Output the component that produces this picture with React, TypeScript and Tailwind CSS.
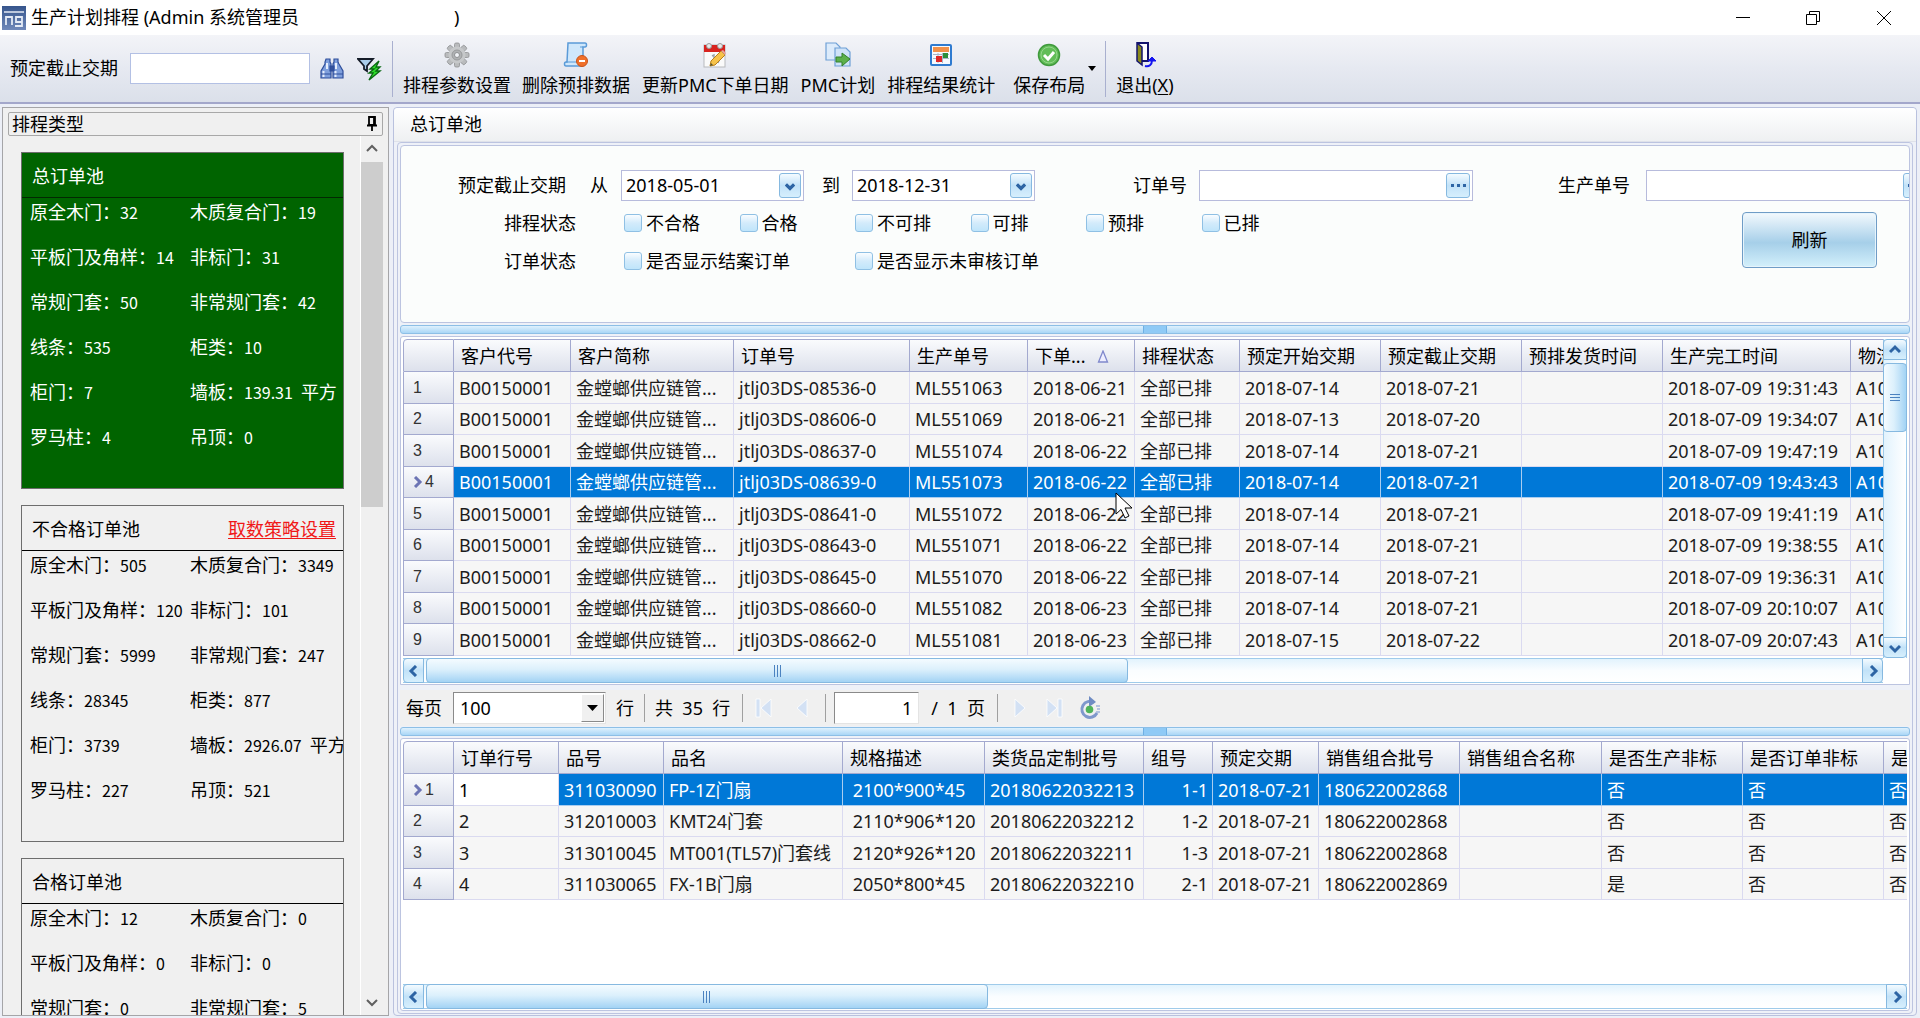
import React from "react";

const ui = "font-['Noto_Sans','Noto_Sans_CJK_SC',sans-serif]";

type CardData = { title: string; link?: string; active?: boolean; items: [string, string, string?][] };

const cards: CardData[] = [
  {
    title: "总订单池",
    active: true,
    items: [
      ["原全木门", "32"], ["木质复合门", "19"],
      ["平板门及角样", "14"], ["非标门", "31"],
      ["常规门套", "50"], ["非常规门套", "42"],
      ["线条", "535"], ["柜类", "10"],
      ["柜门", "7"], ["墙板", "139.31", "平方"],
      ["罗马柱", "4"], ["吊顶", "0"],
    ],
  },
  {
    title: "不合格订单池",
    link: "取数策略设置",
    items: [
      ["原全木门", "505"], ["木质复合门", "3349"],
      ["平板门及角样", "120"], ["非标门", "101"],
      ["常规门套", "5999"], ["非常规门套", "247"],
      ["线条", "28345"], ["柜类", "877"],
      ["柜门", "3739"], ["墙板", "2926.07", "平方"],
      ["罗马柱", "227"], ["吊顶", "521"],
    ],
  },
  {
    title: "合格订单池",
    items: [
      ["原全木门", "12"], ["木质复合门", "0"],
      ["平板门及角样", "0"], ["非标门", "0"],
      ["常规门套", "0"], ["非常规门套", "5"],
    ],
  },
];

const orderHead = ["客户代号", "客户简称", "订单号", "生产单号", "下单...", "排程状态", "预定开始交期", "预定截止交期", "预排发货时间", "生产完工时间", "物流"];
const orders = [
  ["08536", "ML551063", "21", "2018-07-14", "2018-07-21", "19:31:43"],
  ["08606", "ML551069", "21", "2018-07-13", "2018-07-20", "19:34:07"],
  ["08637", "ML551074", "22", "2018-07-14", "2018-07-21", "19:47:19"],
  ["08639", "ML551073", "22", "2018-07-14", "2018-07-21", "19:43:43"],
  ["08641", "ML551072", "22", "2018-07-14", "2018-07-21", "19:41:19"],
  ["08643", "ML551071", "22", "2018-07-14", "2018-07-21", "19:38:55"],
  ["08645", "ML551070", "22", "2018-07-14", "2018-07-21", "19:36:31"],
  ["08660", "ML551082", "23", "2018-07-14", "2018-07-21", "20:10:07"],
  ["08662", "ML551081", "23", "2018-07-15", "2018-07-22", "20:07:43"],
].map(([no, ml, day, start, end, time]) => [
  "B00150001", "金螳螂供应链管...", `jtlj03DS-${no}-0`, ml, `2018-06-${day}`, "全部已排", start, end, "", `2018-07-09 ${time}`, "A10",
]);

const lineHead = ["订单行号", "品号", "品名", "规格描述", "类货品定制批号", "组号", "预定交期", "销售组合批号", "销售组合名称", "是否生产非标", "是否订单非标", "是"];
const lines = [
  ["1", "311030090", "FP-1Z门扇", "\u00a02100*900*45", "20180622032213", "1-1", "2018-07-21", "180622002868", "", "否", "否", "否"],
  ["2", "312010003", "KMT24门套", "\u00a02110*906*120", "20180622032212", "1-2", "2018-07-21", "180622002868", "", "否", "否", "否"],
  ["3", "313010045", "MT001(TL57)门套线", "\u00a02120*926*120", "20180622032211", "1-3", "2018-07-21", "180622002868", "", "否", "否", "否"],
  ["4", "311030065", "FX-1B门扇", "\u00a02050*800*45", "20180622032210", "2-1", "2018-07-21", "180622002869", "", "是", "否", "否"],
];

/* ---------- icons ---------- */

const Logo = () => (
  <svg width="24" height="24" viewBox="0 0 24 24" aria-hidden="true">
    <defs>
      <linearGradient id="logo-bg" x1="0" y1="0" x2="0" y2="1"><stop offset="0" stopColor="#36558c" /><stop offset="1" stopColor="#7089ba" /></linearGradient>
    </defs>
    <rect width="24" height="24" fill="url(#logo-bg)" />
    <path d="M2 6h20" stroke="#e4eaf5" strokeWidth="1.500" />
    <path d="M4 19v-8h6v8M20 16h-6v-5h6v9h-7" fill="none" stroke="#e4eaf5" strokeWidth="1.800" />
  </svg>
);
const Binoculars = () => (
  <svg width="24" height="22" viewBox="0 0 24 22" aria-hidden="true">
    <g stroke="#2f4f9c" strokeWidth="1.2" fill="#7f9fdc">
      <path d="M6 1h4v3l1 2v14H1v-7l4-7V4z" />
      <path d="M14 1h4v3l1 2 4 7v7H13V6l1-2z" />
      <path d="M10 8h4v5h-4z" fill="#34519c" />
    </g>
    <path d="M3.500 13v6M15.500 13v6M7 5v6M16 5v6" stroke="#e6eefc" strokeWidth="2" />
    <path d="M1 16h10M13 16h10" stroke="#2f4f9c" />
  </svg>
);
const Filter = () => (
  <svg width="25" height="24" viewBox="0 0 25 24" aria-hidden="true">
    <path d="M1 2h15l-6 7v5l-3-2V9z" fill="#a9cdea" stroke="#151c28" strokeWidth="1.800" />
    <path d="M22 4l-9 8h4l-5 4h4l-4 7 11-9h-4l4-4h-4z" fill="#2ee02a" stroke="#0a6a12" strokeWidth="1.400" />
  </svg>
);
const Gear = () => (
  <svg width="26" height="26" viewBox="0 0 26 26" aria-hidden="true">
    <g fill="#b9bbbd" stroke="#8f9193" strokeWidth=".8">
      {[0, 45, 90, 135].map((a) => <rect key={a} x="10.500" y="1" width="5" height="24" rx="1.500" transform={`rotate(${a} 13 13)`} />)}
    </g>
    <circle cx="13" cy="13" r="8.500" fill="#c6c8ca" />
    <circle cx="13" cy="13" r="5" fill="#b0b2b4" stroke="#989a9c" />
    <circle cx="13" cy="13" r="2.500" fill="#f1f3f7" stroke="#8e9092" />
  </svg>
);
const ScrollMinus = () => (
  <svg width="26" height="26" viewBox="0 0 26 26" aria-hidden="true">
    <path d="M5 1h17c2 0 2 4 0 4h-2v15c0 2-1 4-3 4H3c-2 0-2-4 0-4h1z" fill="#cfe7fb" stroke="#5b9bd8" strokeWidth="1.500" />
    <path d="M3 20h12M20 5h-3" stroke="#5b9bd8" />
    <circle cx="19" cy="19" r="5.500" fill="#f0702a" stroke="#c9531a" />
    <path d="M16 19h6" stroke="#fff" strokeWidth="2" />
  </svg>
);
const CalendarEdit = () => (
  <svg width="24" height="26" viewBox="0 0 24 26" aria-hidden="true">
    <rect x="1" y="3" width="21" height="22" fill="#fafafa" stroke="#b8babd" />
    <path d="M1 3h21v7H1z" fill="#d8231f" />
    <circle cx="6" cy="4" r="2.500" fill="#e9e9e9" stroke="#999" /><circle cx="17" cy="4" r="2.500" fill="#e9e9e9" stroke="#999" />
    <path d="M9 14l2-1v8M14 13h4l-3 8" fill="none" stroke="#9aa0a8" strokeWidth="1.400" />
    <path d="M7 24l1-5L18 9l4 4-10 10z" fill="#f7c34a" stroke="#b87e1c" />
    <path d="M18 9l4 4 1-2-3-3z" fill="#e8a49a" />
    <path d="M7 24l1-3 2 2z" fill="#553" />
  </svg>
);
const PagesArrow = () => (
  <svg width="26" height="26" viewBox="0 0 26 26" aria-hidden="true">
    <path d="M1 1h10l4 4v13H1z" fill="#dcebfb" stroke="#6fa0d6" strokeWidth="1.200" />
    <path d="M10 6h11l4 4v14H10z" fill="#cfe3f8" stroke="#6fa0d6" strokeWidth="1.200" />
    <path d="M11 15h6v-4l8 6-8 7v-4h-6z" fill="#5cb04a" stroke="#33802a" />
  </svg>
);
const CalendarGrid = () => (
  <svg width="22" height="22" viewBox="0 0 22 22" aria-hidden="true">
    <rect x="1" y="1" width="20" height="20" rx="1" fill="#f6fafe" stroke="#2f7bd0" strokeWidth="2" />
    <path d="M3 3h16v5H3z" fill="#f2914a" />
    <path d="M3 10.500h16M3 14.500h16M8 9v10M12.500 9v10" stroke="#a9b6c8" />
    <path d="M6 12h6v6H6z" fill="#e02828" /><path d="M13 9h5v5h-5z" fill="#2d8f3a" />
  </svg>
);
const CheckCircle = () => (
  <svg width="24" height="24" viewBox="0 0 24 24" aria-hidden="true">
    <circle cx="12" cy="12" r="10.500" fill="#62bd58" stroke="#3f9a3c" strokeWidth="1.500" />
    <circle cx="12" cy="12" r="8" fill="none" stroke="#93d78a" />
    <path d="M7 12l4 4 6-7" fill="none" stroke="#fff" strokeWidth="3" />
  </svg>
);
const Exit = () => (
  <svg width="24" height="26" viewBox="0 0 24 26" aria-hidden="true">
    <path d="M4 1h11v18H9" fill="#fff" stroke="#14146e" strokeWidth="2" />
    <path d="M4 1l5 4v18l-5-4z" fill="#8a8a1c" stroke="#14146e" strokeWidth="1.500" />
    <path d="M15 19l4-4 4 4z" fill="#1414f0" stroke="#1414f0" />
    <path d="M12 24c4 1 7-1 7-6" fill="none" stroke="#1414f0" strokeWidth="2" />
  </svg>
);
const Chevron = ({ dir, size = 12, color = "#2d64a4", w = 3 }: { dir: "l" | "r" | "u" | "d"; size?: number; color?: string; w?: number }) => {
  const d = { l: "M8 1L3 6l5 5", r: "M4 1l5 5-5 5", u: "M1 8l5-5 5 5", d: "M1 4l5 5 5-5" }[dir];
  return <svg width={size} height={size} viewBox="0 0 12 12" aria-hidden="true"><path d={d} fill="none" stroke={color} strokeWidth={w} /></svg>;
};
const Refresh = () => (
  <svg width="22" height="24" viewBox="0 0 22 24" aria-hidden="true">
    <path d="M15 6.500A8 8 0 1 0 18 17" fill="none" stroke="#7f98cc" strokeWidth="3" />
    <path d="M10 0l7 6-7 5z" fill="#6f8cc4" />
    <circle cx="10.500" cy="13.500" r="3.800" fill="#4fb35a" />
    <path d="M17 10h4M18 13h3M17 16h4" stroke="#9fb2da" strokeWidth="1.500" />
  </svg>
);
const Pager = ({ kind }: { kind: "first" | "prev" | "next" | "last" }) => (
  <svg width="18" height="20" viewBox="0 0 18 20" aria-hidden="true" fill="#d3e1f4" stroke="#fff" strokeWidth=".8">
    {kind === "first" && <path d="M1 1h4v18H1zM16 1v18L6 10z" />}
    {kind === "prev" && <path d="M14 1v18L4 10z" />}
    {kind === "next" && <path d="M4 1v18l10-9z" />}
    {kind === "last" && <path d="M2 1v18l10-9zM13 1h4v18h-4z" />}
  </svg>
);

/* ---------- small parts ---------- */

const glass = "border border-[#86b9e0] bg-linear-to-b from-[#f4fbff] via-[#c2e2f8] to-[#d6effd]";

function ToolButton({ icon, children, className = "" }: { icon: React.ReactNode; children: React.ReactNode; className?: string }) {
  return (
    <button type="button" className={`flex flex-col items-center whitespace-nowrap leading-6 ${className}`}>
      <span className="flex h-[26px] items-center">{icon}</span>
      <span className="mt-[5px]">{children}</span>
    </button>
  );
}

function Card({ title, link, active, items }: CardData) {
  return (
    <section className={`h-[337px] shrink-0 overflow-hidden border border-[#6d6d6d] ${active ? "bg-[#006400] text-white" : "text-black"}`}>
      <header className={`flex h-[45px] items-center justify-between border-b pr-[7px] pl-[10px] ${active ? "border-[#032803]" : "border-black"}`}>
        <h2>{title}</h2>
        {link && <a href="#strategy" className="text-[#f01818] underline underline-offset-2">{link}</a>}
      </header>
      <ul className="grid grid-cols-[160px_1fr] gap-y-[19px] pl-2 leading-[26px] whitespace-nowrap">
        {items.map(([k, v, unit]) => (
          <li key={k} className="h-[26px] min-w-0">
            {k}：<span className="text-[16px]">{v}{unit && "\u2002"}</span>{unit}
          </li>
        ))}
      </ul>
    </section>
  );
}

function DateField({ id, value, label }: { id: string; value: string; label: string }) {
  return (
    <div className="flex h-[31px] w-[183px] shrink-0 items-center border border-[#b7bbdc] bg-white pr-[2px]">
      <input id={id} aria-label={label} defaultValue={value} className="min-w-0 flex-1 pl-1 outline-none" />
      <button type="button" aria-label="选择日期" className={`flex h-[25px] w-[22px] items-center justify-center rounded-[3px] ${glass}`}>
        <Chevron dir="d" size={10} w={4} />
      </button>
    </div>
  );
}

function LookupField({ id, className }: { id: string; className: string }) {
  return (
    <div className={`flex h-[31px] shrink-0 items-center border border-[#b7bbdc] bg-white pr-[2px] ${className}`}>
      <input id={id} className="min-w-0 flex-1 pl-1 outline-none" />
      <button type="button" aria-label="浏览" className={`flex h-[25px] w-6 items-center justify-center gap-[3px] rounded-[3px] ${glass}`}>
        <i className="size-[3px] bg-[#2d64a4]" /><i className="size-[3px] bg-[#2d64a4]" /><i className="size-[3px] bg-[#2d64a4]" />
      </button>
    </div>
  );
}

function Check({ label }: { label: string }) {
  return (
    <label className="flex items-center gap-1 whitespace-nowrap">
      <input type="checkbox" className="size-[18px] shrink-0 appearance-none rounded-[3px] border border-[#8fc0e4] bg-linear-to-b from-[#fafdff] via-[#d3ebfb] to-[#bfe5fb] checked:bg-[#4a90d9]" />
      {label}
    </label>
  );
}

function Splitter() {
  return (
    <div className="flex h-[9px] shrink-0 justify-center rounded-[3px] border border-[#8dbfe6] bg-linear-to-b from-[#dff1fd] to-[#a9d6f6]">
      <span className="w-6 border-x border-[#6fb0e4] bg-[#8fcaf6]" />
    </div>
  );
}

function HScroll({ thumb }: { thumb: string }) {
  return (
    <div className="flex h-[25px] shrink-0 border-y border-[#9fcbea] bg-linear-to-b from-[#e2f3fd] via-[#fafdff] to-white">
      <button type="button" aria-label="向左" className={`-my-px flex w-[21px] items-center justify-center rounded-l-[4px] ${glass}`}><Chevron dir="l" /></button>
      <div className="-my-px min-w-0 flex-1 pl-[2px]">
        <div className={`flex h-full items-center justify-center gap-[2px] rounded-[4px] border border-[#86b9e0] bg-linear-to-b from-[#f4fbff] from-0% via-[#dcf0fc] via-45% to-[#a3d3f4] ${thumb}`}>
          <i className="h-3 w-px bg-[#4b82c0]" /><i className="h-3 w-px bg-[#4b82c0]" /><i className="h-3 w-px bg-[#4b82c0]" />
        </div>
      </div>
      <button type="button" aria-label="向右" className={`-my-px flex w-[21px] items-center justify-center rounded-r-[4px] ${glass}`}><Chevron dir="r" /></button>
    </div>
  );
}

const headCell = "border-r border-b border-[#a3a9cf] bg-linear-to-b from-[#fafbfd] to-[#dde1ec] font-normal text-left";

function DataTable({ label, head, rows, widths, current, sorted, rightCol, focusCell }: {
  label: string; head: string[]; rows: string[][]; widths: number[]; current: number; sorted?: number; rightCol?: number; focusCell?: boolean;
}) {
  const total = 51 + widths.reduce((a, b) => a + b, 0);
  return (
    <table aria-label={label} className="table-fixed border-separate border-spacing-0 leading-6 whitespace-nowrap" style={{ width: total }}>
      <colgroup>
        <col style={{ width: 51 }} />
        {widths.map((w, i) => <col key={i} style={{ width: w }} />)}
      </colgroup>
      <thead>
        <tr className="h-[33px]">
          <th aria-label="行号" className={`rounded-tl-[4px] border-t border-l ${headCell}`} />
          {head.map((h, i) => (
            <th key={h} scope="col" className={`overflow-hidden border-t pl-[7px] ${headCell}`}>
              {h}
              {sorted === i && (
                <svg className="ml-3 inline-block align-baseline" width="12" height="13" viewBox="0 0 12 13" aria-label="升序"><path d="M6 1l4.500 11h-9z" fill="#eef" stroke="#7f88cc" strokeWidth="1.300" /></svg>
              )}
            </th>
          ))}
        </tr>
      </thead>
      <tbody>
        {rows.map((r, ri) => (
          <tr key={ri} className={`odd:h-8 even:h-[31px] ${ri === current ? "text-white" : "text-[#1c1c1c]"}`}>
            <th scope="row" className={`border-l font-['Liberation_Sans',sans-serif] text-[16px] text-[#333] ${headCell}`}>
              <span className="flex items-center gap-[2px] pl-[7px]">
                {ri === current && <Chevron dir="r" color="#6c74b4" w={3} />}
                <span className={ri === current ? "" : "pl-[2px]"}>{ri + 1}</span>
              </span>
            </th>
            {r.map((c, ci) => {
              const blue = ri === current && !(focusCell && ci === 0);
              return (
                <td key={ci} className={`overflow-hidden border-r border-b pr-1 pl-[5px] ${blue ? "border-[#a9cdf0] bg-[#0078d7]" : ri === current ? "border-[#dadaf0] bg-white text-black" : "border-[#dadaf0] bg-[#f6f6f6]"} ${rightCol === ci ? "text-right" : ""}`}>
                  {c}
                </td>
              );
            })}
          </tr>
        ))}
      </tbody>
    </table>
  );
}

const Bar = () => <span className="h-7 w-px shrink-0 bg-[#a0a0a0]" />;

export default function App() {
  return (
    <div className={`flex h-screen flex-col overflow-hidden bg-[#eceff7] text-[18px] text-black ${ui}`}>
      {/* title bar */}
      <header className="flex h-[35px] shrink-0 items-center bg-white pl-[2px]">
        <Logo />
        <h1 className="ml-[5px] whitespace-pre">生产计划排程 (Admin 系统管理员</h1>
        <span className="ml-[155px]">)</span>
        <div className="ml-auto flex h-full items-center">
          <button type="button" aria-label="最小化" className="flex h-full w-[70px] items-center justify-center"><svg width="16" height="16"><path d="M1 7.500h14" stroke="#000" /></svg></button>
          <button type="button" aria-label="还原" className="flex h-full w-[70px] items-center justify-center"><svg width="16" height="16" fill="none" stroke="#000"><path d="M1.500 4.500h10v10h-10zM4.500 4.500v-3h10v10h-3" /></svg></button>
          <button type="button" aria-label="关闭" className="flex h-full w-[72px] items-center justify-center"><svg width="16" height="16"><path d="M1 1l14 14M15 1L1 15" stroke="#000" /></svg></button>
        </div>
      </header>

      {/* tool bar */}
      <div className="flex h-[69px] shrink-0 border-b-2 border-[#a3a7cb] bg-linear-to-b from-[#f3f4f8] via-[#e6e9f1] to-[#dbe0ea] pl-[10px]">
        <div className="flex items-center">
          <label htmlFor="due">预定截止交期</label>
          <input id="due" className="ml-3 h-[31px] w-[180px] border border-[#b3c0e4] bg-white px-1 outline-none" />
          <button type="button" aria-label="查找" className="ml-[10px]"><Binoculars /></button>
          <button type="button" aria-label="筛选" className="ml-[13px]"><Filter /></button>
        </div>
        <span className="mt-[6px] ml-[10px] h-14 w-px shrink-0 bg-[#a9b0cf]" />
        <div className="flex items-start pt-[7px]">
          <ToolButton className="ml-[10px]" icon={<Gear />}>排程参数设置</ToolButton>
          <ToolButton className="ml-[11px]" icon={<ScrollMinus />}>删除预排数据</ToolButton>
          <ToolButton className="ml-3" icon={<CalendarEdit />}>更新PMC下单日期</ToolButton>
          <ToolButton className="ml-3" icon={<PagesArrow />}>PMC计划</ToolButton>
          <ToolButton className="ml-3" icon={<CalendarGrid />}>排程结果统计</ToolButton>
          <ToolButton className="ml-[18px]" icon={<CheckCircle />}>保存布局</ToolButton>
          <button type="button" aria-label="更多布局选项" className="mt-6 ml-[3px]">
            <svg width="8" height="6"><path d="M0 0h8L4 5z" /></svg>
          </button>
        </div>
        <span className="mt-[6px] ml-[9px] h-14 w-px shrink-0 bg-[#a9b0cf]" />
        <div className="flex items-start pt-[7px]">
          <ToolButton className="ml-[10px]" icon={<Exit />}>退出(<u className="underline-offset-2">X</u>)</ToolButton>
        </div>
      </div>

      <div className="flex min-h-0 flex-1 gap-1 pt-[3px] pr-[3px] pb-[2px] pl-[2px]">
        {/* schedule types */}
        <aside className="flex w-[387px] shrink-0 flex-col border border-[#a5a5a8] bg-[#f0f0f0] px-[5px] pt-1">
          <div className="flex h-6 shrink-0 items-center justify-between rounded-[2px] border border-[#a8a8a8] pr-1 pl-[3px] leading-5">
            <h2>排程类型</h2>
            <button type="button" aria-label="固定">
              <svg width="12" height="16" viewBox="0 0 12 16"><path d="M3 1h6v8H3zM8 1v8M1 9.500h10M6 10v5" fill="none" stroke="#000" strokeWidth="1.800" /></svg>
            </button>
          </div>
          <div className="flex min-h-0 flex-1">
            <div className="flex min-w-0 flex-1 flex-col gap-4 overflow-hidden pt-4 pr-[16px] pl-[13px] font-['Noto_Sans_CJK_SC',sans-serif]">
              {cards.map((c) => <Card key={c.title} {...c} />)}
            </div>
            <div className="flex w-[23px] shrink-0 flex-col border-l border-white">
              <button type="button" aria-label="向上" className="flex h-[26px] items-center justify-center"><Chevron dir="u" color="#606060" w={2} /></button>
              <div className="min-h-0 flex-1"><div className="h-5/12 bg-[#cdcdcd]" /></div>
              <button type="button" aria-label="向下" className="flex h-[26px] items-center justify-center"><Chevron dir="d" color="#606060" w={2} /></button>
            </div>
          </div>
        </aside>

        {/* order pool */}
        <main className="flex min-w-0 flex-1 flex-col rounded-[4px] border border-[#b9c1de] bg-[#eef1f8] px-[3px] pb-px">
          <h2 className="-mx-[3px] flex h-[34px] shrink-0 items-center rounded-t-[4px] border-b border-[#dfe2ea] bg-linear-to-b from-white to-[#eef0f2] pl-4">总订单池</h2>
          <div className="flex min-h-0 flex-1 flex-col rounded-[4px] border border-[#bcc4e0] p-[2px]">
            <form className="h-[178px] shrink-0 overflow-hidden rounded-[4px] border border-[#bcc4e0] bg-[#fbfdfc] pt-6" onSubmit={(e) => e.preventDefault()}>
              <div className="flex items-center whitespace-nowrap">
                <span className="w-[165px] shrink-0 text-right">预定截止交期</span>
                <label htmlFor="from" className="mr-[13px] ml-6">从</label>
                <DateField id="from" label="开始日期" value="2018-05-01" />
                <label htmlFor="to" className="mr-3 ml-[18px]">到</label>
                <DateField id="to" label="结束日期" value="2018-12-31" />
                <label htmlFor="order" className="mr-3 ml-[98px]">订单号</label>
                <LookupField id="order" className="w-[274px]" />
                <label htmlFor="prod" className="mr-4 ml-[85px]">生产单号</label>
                <LookupField id="prod" className="w-[284px]" />
              </div>
              <div className="mt-[7px] flex items-start">
                <div className="flex flex-col gap-2">
                  <div className="flex h-[30px] items-center">
                    <span className="w-[175px] text-right">排程状态</span>
                    <div className="ml-12 grid w-[693px] grid-cols-6">
                      {["不合格", "合格", "不可排", "可排", "预排", "已排"].map((l) => <Check key={l} label={l} />)}
                    </div>
                  </div>
                  <div className="flex h-[30px] items-center">
                    <span className="w-[175px] text-right">订单状态</span>
                    <div className="ml-12 grid w-[693px] grid-cols-3">
                      <Check label="是否显示结案订单" />
                      <Check label="是否显示未审核订单" />
                    </div>
                  </div>
                </div>
                <button type="submit" className="mt-1 mr-8 ml-auto h-14 w-[135px] rounded-[4px] border border-[#6f9cc6] bg-linear-to-b from-[#f3f9fd] from-0% via-[#a6cfe9] via-55% to-[#d3f0fb] inset-ring inset-ring-[#e6f4fc]">刷新</button>
              </div>
            </form>

            <div className="mt-[2px] mb-[2px] flex flex-col"><Splitter /></div>

            <div className="flex shrink-0 flex-col rounded-t-[3px] border border-[#bcc4e0] bg-white p-[2px] pb-px">
              <div className="flex h-[319px]">
                <div className="relative min-w-0 flex-1 overflow-hidden">
                  <DataTable label="订单" head={orderHead} rows={orders} widths={[117, 163, 176, 118, 107, 105, 141, 141, 141, 188, 50]} current={3} sorted={4} />
                  <svg className="absolute top-[153px] left-[712px]" width="20" height="28" viewBox="0 0 20 28" aria-hidden="true">
                    <path d="M1 1v21l5-4.500 4 8.500 4-2-4-8h7z" fill="#fff" stroke="#000" />
                  </svg>
                </div>
                <div className="flex w-6 shrink-0 flex-col border-x border-[#9fcbea] bg-linear-to-r from-[#e2f3fd] to-white">
                  <button type="button" aria-label="向上" className={`-mx-px flex h-[21px] items-center justify-center rounded-t-[4px] ${glass}`}><Chevron dir="u" /></button>
                  <div className="-mx-px min-h-0 flex-1 pt-[3px]">
                    <div className="flex h-1/4 flex-col items-center justify-center gap-[2px] rounded-[4px] border border-[#86b9e0] bg-linear-to-r from-[#f4fbff] from-0% via-[#dcf0fc] via-45% to-[#a3d3f4]">
                      <i className="h-px w-[10px] bg-[#4b82c0]" /><i className="h-px w-[10px] bg-[#4b82c0]" /><i className="h-px w-[10px] bg-[#4b82c0]" />
                    </div>
                  </div>
                  <button type="button" aria-label="向下" className={`-mx-px flex h-[21px] items-center justify-center rounded-b-[4px] ${glass}`}><Chevron dir="d" /></button>
                </div>
              </div>
              <div className="mr-6 flex flex-col"><HScroll thumb="w-22/45" /></div>
            </div>

            {/* pager */}
            <div className="mt-[5px] flex h-9 shrink-0 items-center bg-[#f0f0f0] pl-[6px] whitespace-nowrap">
              <label htmlFor="size">每页</label>
              <div className="relative ml-[11px] h-8 w-[153px] border border-t-[#8a8a8a] border-r-[#e4e4e4] border-b-[#e4e4e4] border-l-[#8a8a8a] bg-white">
                <select id="size" className="h-full w-full appearance-none pl-[6px] outline-none"><option>100</option><option>50</option></select>
                <span className="pointer-events-none absolute inset-y-px right-px flex w-[23px] items-center justify-center border border-t-white border-r-[#8a8a8a] border-b-[#8a8a8a] border-l-white bg-[#f0f0f0]">
                  <svg width="12" height="8"><path d="M0 1h11L5.500 7z" /></svg>
                </span>
              </div>
              <span className="mr-[10px] ml-[10px]">行</span>
              <Bar />
              <span className="mr-3 ml-[10px]">共&nbsp; 35&nbsp; 行</span>
              <Bar />
              <button type="button" aria-label="首页" className="ml-3"><Pager kind="first" /></button>
              <button type="button" aria-label="上一页" className="mr-[14px] ml-5"><Pager kind="prev" /></button>
              <Bar />
              <input aria-label="页码" defaultValue="1" className="ml-2 h-8 w-[85px] border border-t-[#8a8a8a] border-r-[#e4e4e4] border-b-[#e4e4e4] border-l-[#8a8a8a] bg-white pr-[6px] text-right outline-none" />
              <span className="mr-3 ml-3">/&nbsp; 1&nbsp; 页</span>
              <Bar />
              <button type="button" aria-label="下一页" className="ml-[13px]"><Pager kind="next" /></button>
              <button type="button" aria-label="末页" className="ml-4"><Pager kind="last" /></button>
              <button type="button" aria-label="刷新列表" className="ml-4"><Refresh /></button>
            </div>

            <div className="mt-px mb-[2px] flex flex-col"><Splitter /></div>

            <div className="flex min-h-0 flex-1 flex-col rounded-[3px] border border-[#bcc4e0] bg-white p-[2px] pb-px">
              <div className="min-h-0 flex-1 overflow-hidden">
                <DataTable label="订单明细" head={lineHead} rows={lines} widths={[105, 105, 179, 142, 159, 69, 106, 141, 142, 141, 141, 27]} current={0} rightCol={5} focusCell />
              </div>
              <HScroll thumb="w-5/13" />
            </div>
          </div>
        </main>
      </div>
    </div>
  );
}
